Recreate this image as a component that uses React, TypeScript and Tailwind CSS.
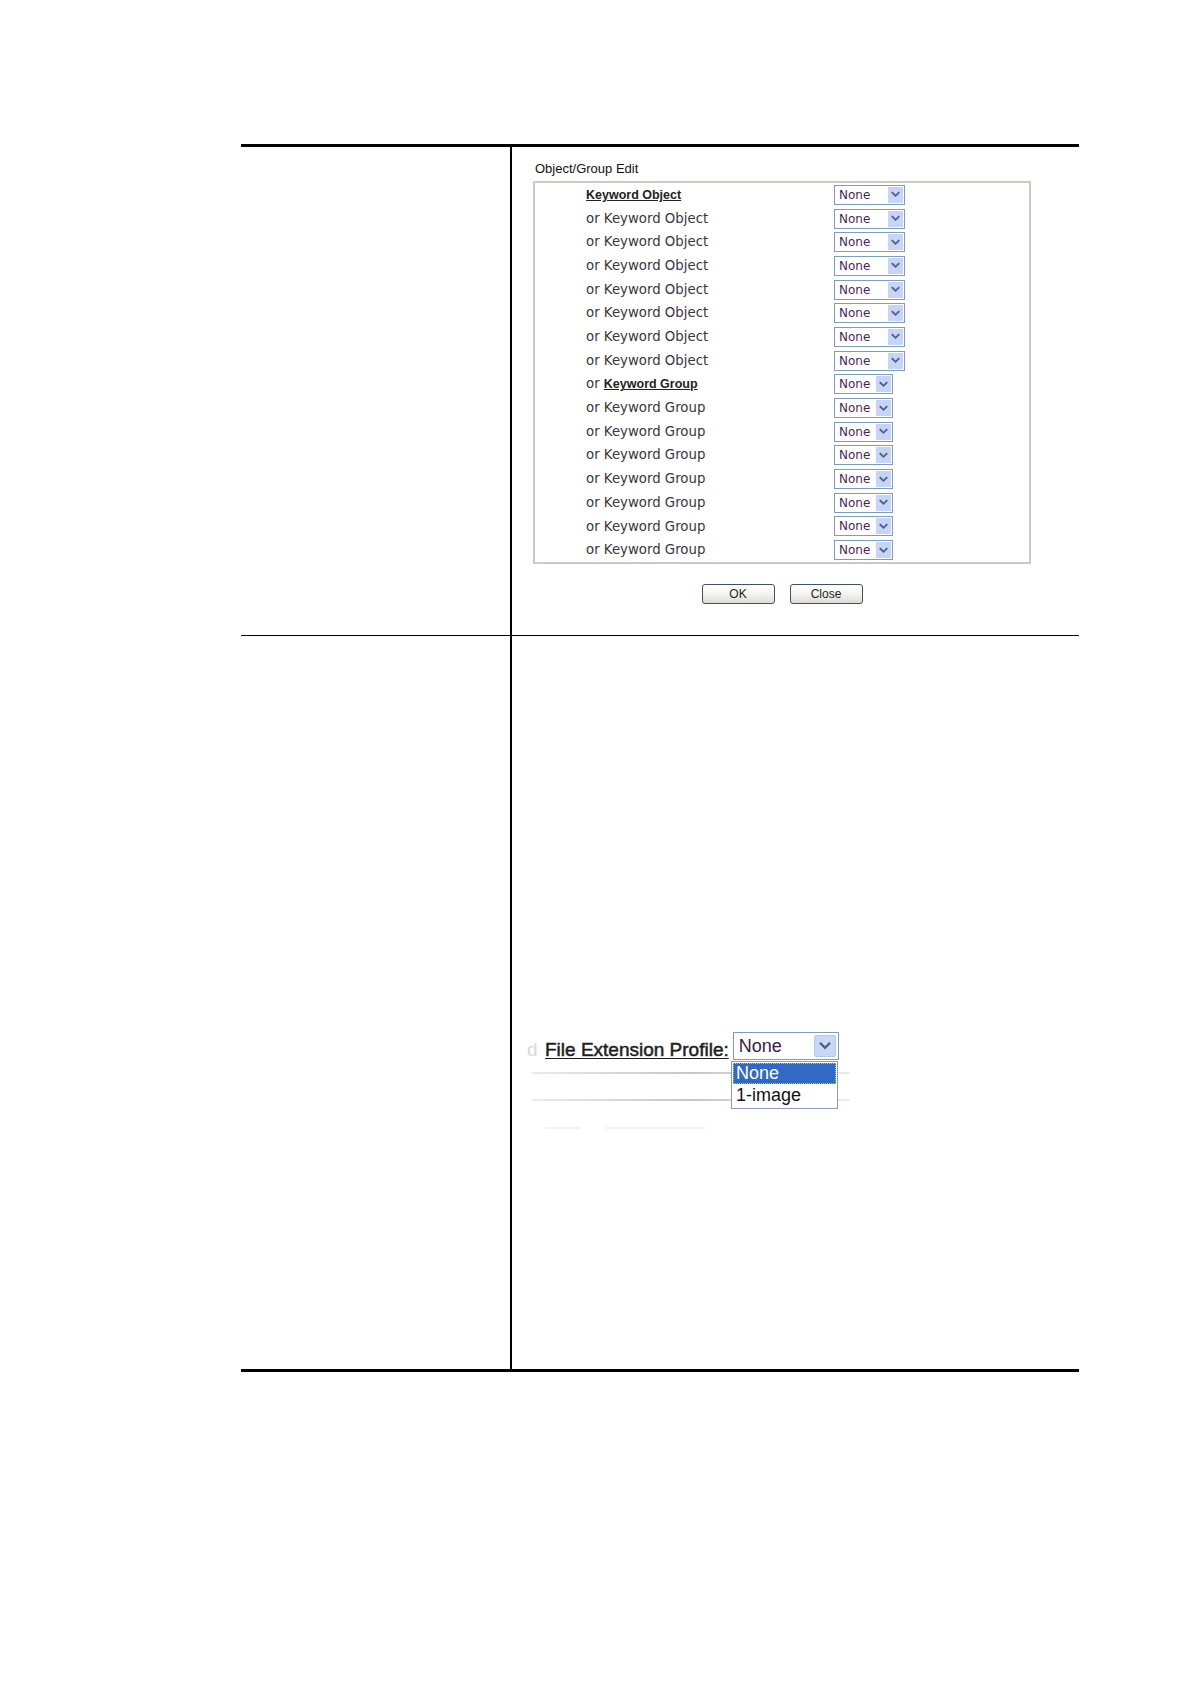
import React from "react";

function Chevron({ size = 9, color = "#4d6185" }: { size?: number; color?: string }) {
  return (
    <svg width={size} height={size} viewBox="0 0 10 10">
      <polyline points="1.5,3 5,6.5 8.5,3" fill="none" stroke={color} strokeWidth="2" strokeLinecap="square" />
    </svg>
  );
}

function SmallSelect({ wide }: { wide: boolean }) {
  return (
    <div className={wide ? "flex h-[20px] w-[71px] border border-[#7f9db9] bg-white" : "flex h-[20px] w-[59px] border border-[#7f9db9] bg-white"}>
      <span className="flex-1 pl-[4px] font-['DejaVu_Sans',sans-serif] text-[12px] leading-[18px] text-[#4a1f5c]">None</span>
      <span className="my-[1px] mr-[1px] flex w-[15px] items-center justify-center bg-[#c6d5f7]">
        <Chevron />
      </span>
    </div>
  );
}

function Row({ first, group, link }: { first?: boolean; group: boolean; link?: boolean }) {
  const word = group ? "Keyword Group" : "Keyword Object";
  return (
    <div className="flex h-[23.7px] items-center pl-[51px]">
      <div className="w-[248px] font-['DejaVu_Sans',sans-serif] text-[13.3px] text-[#3b3540]">
        {first ? (
          <span className="font-['Liberation_Sans',Arial,sans-serif] text-[12.5px] font-bold text-[#222] underline">{word}</span>
        ) : link ? (
          <>
            or{" "}
            <span className="font-['Liberation_Sans',Arial,sans-serif] text-[12.5px] font-bold text-[#222] underline">{word}</span>
          </>
        ) : (
          <>or {word}</>
        )}
      </div>
      <SmallSelect wide={!group} />
    </div>
  );
}

function Btn({ label }: { label: string }) {
  return (
    <div className="flex h-[20px] w-[73px] items-center justify-center rounded-[3px] border border-[#3d5268] bg-gradient-to-b from-white via-[#f4f4f0] to-[#dcdcd4] font-['Liberation_Sans',Arial,sans-serif] text-[12px] text-[#222]">
      {label}
    </div>
  );
}

export default function App() {
  const rows: { first?: boolean; group: boolean; link?: boolean }[] = [];
  for (let i = 0; i < 8; i++) rows.push({ first: i === 0, group: false });
  for (let i = 0; i < 8; i++) rows.push({ group: true, link: i === 0 });

  return (
    <div className="h-[1684px] w-[1190px] bg-white pl-[241px] pt-[144px]">
      <div className="w-[838px] border-y-[3px] border-black">
        <div className="flex h-[489px] border-b border-black">
          <div className="w-[271px] border-r-2 border-black" />
          <div className="flex-1 pl-[21px] pt-[14px]">
            <div className="pl-[2px] font-['Liberation_Sans',Arial,sans-serif] text-[13px] leading-[16px] text-[#111]">
              Object/Group Edit
            </div>
            <div className="mt-[4px] w-[498px] border-2 border-[#cbcbc3]">
              {rows.map((r, i) => (
                <Row key={i} first={r.first} group={r.group} link={r.link} />
              ))}
            </div>
            <div className="mt-[20px] flex w-[498px] justify-center gap-[15px]">
              <Btn label="OK" />
              <Btn label="Close" />
            </div>
          </div>
        </div>
        <div className="flex h-[733px]">
          <div className="w-[271px] border-r-2 border-black" />
          <div className="relative flex-1 pt-[396px]">
            <div className="flex h-[28px] items-center">
              <span className="ml-[15px] mt-[8px] w-[18px] font-['Liberation_Sans',Arial,sans-serif] text-[19px] text-[#d8d8d8]">d</span>
              <span className="mt-[8px] font-['Liberation_Sans',Arial,sans-serif] text-[19px] leading-[22px] text-[#1e1e1e] underline underline-offset-[2px] [-webkit-text-stroke:0.5px_#1e1e1e]">
                File Extension Profile:
              </span>
              <div className="ml-[4px] flex h-[28px] w-[106px] border border-[#7f9db9] bg-white">
                <span className="flex-1 pl-[5px] font-['Liberation_Sans',Arial,sans-serif] text-[18px] leading-[26px] text-[#3a1a4a]">None</span>
                <span className="my-[2px] mr-[2px] flex w-[22px] items-center justify-center rounded-[2px] border border-[#b7c7ea] bg-[#c9d8f8]">
                  <Chevron size={12} />
                </span>
              </div>
            </div>
            <div className="ml-[20px] mt-[12px] h-[2px] w-[318px] bg-gradient-to-r from-[#ecece6] via-[#c8c8bd] to-[#ecece6]" />
            <div className="ml-[20px] mt-[25px] h-[2px] w-[318px] bg-gradient-to-r from-[#ecece6] via-[#c8c8bd] to-[#ecece6]" />
            <div className="ml-[33px] mt-[26px] flex gap-[25px]">
              <div className="h-[2px] w-[35px] bg-[#f3f3f3]" />
              <div className="h-[2px] w-[100px] bg-[#f3f3f3]" />
            </div>
            <div className="absolute left-[219px] top-[425px] w-[107px] border border-[#8c9cb4] bg-white p-[1px] font-['Liberation_Sans',Arial,sans-serif] text-[18px]">
              <div className="h-[21px] border border-dotted border-[#a8b8e0] bg-[#316ac5] pl-[2px] leading-[19px] text-white">None</div>
              <div className="h-[23px] pl-[3px] leading-[22px] text-[#111]">1-image</div>
            </div>
          </div>
        </div>
      </div>
    </div>
  );
}
